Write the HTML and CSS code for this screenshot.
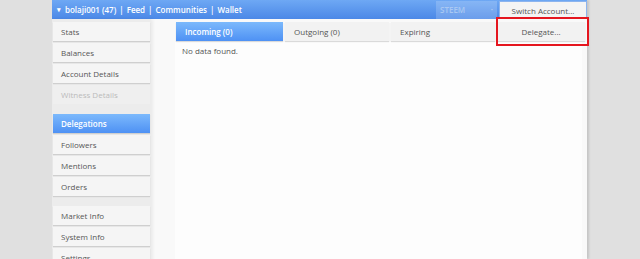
FILE: index.html
```html
<!DOCTYPE html>
<html lang="en">
<head>
    <meta charset="UTF-8">
    <title>Wallet - Delegations</title>
    <link rel="stylesheet" href="styles.css">
</head>
<body>

    <div class="window">
        <!-- Title bar -->
        <div class="titlebar">
            <div class="nav">
                <span class="caret">&#9662;</span>
                <span>bolaji001 (47)</span><span class="sep">|</span>
                <span>Feed</span><span class="sep">|</span>
                <span>Communities</span><span class="sep">|</span>
                <span>Wallet</span>
            </div>
            <div class="chain-select">STEEM <span class="dot">&#8226;</span></div>
            <button class="switch-btn">Switch Account...</button>
        </div>

        <div class="layout">
            <!-- Sidebar -->
            <div class="sidebar">
                <div class="side-item">Stats</div>
                <div class="side-item">Balances</div>
                <div class="side-item">Account Details</div>
                <div class="side-item disabled">Witness Details</div>
                <div class="side-gap"></div>
                <div class="side-item active">Delegations</div>
                <div class="side-item">Followers</div>
                <div class="side-item">Mentions</div>
                <div class="side-item">Orders</div>
                <div class="side-gap"></div>
                <div class="side-item">Market Info</div>
                <div class="side-item">System Info</div>
                <div class="side-item">Settings</div>
            </div>

            <!-- Main -->
            <div class="main">
                <div class="tabs">
                    <div class="tab active">Incoming (0)</div>
                    <div class="tab">Outgoing (0)</div>
                    <div class="tab">Expiring</div>
                    <div class="tab center highlight">Delegate...</div>
                </div>
                <div class="panel">
                    <p class="empty">No data found.</p>
                </div>
            </div>
        </div>
    </div>

</body>
</html>
```

FILE: styles.css
```css
body {
    margin: 0;
    height: 259px;
    overflow: hidden;
    background-color: #e0e0e0;
    font-family: "Open Sans", "Liberation Sans", sans-serif;
    font-size: 8px;
    color: #555;
}

.window {
    margin-left: 52px;
    width: 535px;
    height: 259px;
    display: flex;
    flex-direction: column;
    background-color: #f9f9f9;
    box-shadow: 2px 0 2px rgba(0, 0, 0, 0.12);
}

/* Title bar */
.titlebar {
    height: 19px;
    display: flex;
    align-items: center;
    background: linear-gradient(#6ea8f4, #4b88e7);
    color: #fff;
    font-weight: 600;
}

.nav {
    flex: 1;
    padding-left: 5px;
    display: flex;
    align-items: center;
    gap: 3px;
}

.caret {
    font-size: 7px;
    margin-right: 1px;
}

.sep {
    margin: 0;
}

.chain-select {
    width: 53px;
    height: 18px;
    margin-right: 2px;
    padding: 0 4px;
    display: flex;
    align-items: center;
    justify-content: space-between;
    background-color: rgba(255, 255, 255, 0.18);
    color: #a9c8f2;
    font-weight: 600;
}

.dot {
    font-size: 6px;
}

.switch-btn {
    width: 88px;
    height: 18px;
    margin-top: 1px;
    border: 1px solid #8cb4ee;
    background-color: #f4f4f4;
    color: #555;
    font-family: inherit;
    font-size: 8px;
    padding: 0;
}

/* Layout */
.layout {
    flex: 1;
    display: flex;
}

.sidebar {
    width: 97px;
    padding: 3px 1px 0 1px;
    display: flex;
    flex-direction: column;
    gap: 2px;
    background-color: #ececec;
    box-shadow: 2px 0 3px rgba(0, 0, 0, 0.06);
}

.side-item {
    height: 19px;
    flex-shrink: 0;
    display: flex;
    align-items: center;
    padding-left: 8px;
    background-color: #f5f5f5;
    box-shadow: 0 1px 1px rgba(0, 0, 0, 0.12);
}

.side-item.disabled {
    color: #bbb;
    background-color: #efefef;
    box-shadow: none;
}

.side-item.active {
    background: linear-gradient(#7cb9fc, #4e91f4);
    color: #fff;
    font-weight: 600;
}

.side-gap {
    height: 6px;
    flex-shrink: 0;
}

/* Main area */
.main {
    flex: 1;
    padding: 3px 2px 0 25px;
    display: flex;
    flex-direction: column;
}

.tabs {
    display: grid;
    grid-template-columns: 107px 104px 104px 1fr;
    gap: 2px;
    height: 19px;
    position: relative;
}

.tab {
    display: flex;
    align-items: center;
    padding-left: 9px;
    background-color: #f2f2f2;
    box-shadow: 0 1px 1px rgba(0, 0, 0, 0.12);
}

.tab.center {
    justify-content: center;
    padding-left: 0;
}

.tab.active {
    background: linear-gradient(#7cb9fc, #4e91f4);
    color: #fff;
    font-weight: 600;
}

/* Red annotation box over the Delegate button */
.highlight {
    position: relative;
}

.highlight::after {
    content: "";
    position: absolute;
    left: -1px;
    top: -5px;
    right: -4px;
    bottom: -5px;
    border: 2px solid #e5161f;
}

.panel {
    flex: 1;
    margin: 1px 3px 0 -1px;
    background-color: #fdfdfd;
}

.empty {
    margin: 0;
    padding: 3px 7px;
}
```
